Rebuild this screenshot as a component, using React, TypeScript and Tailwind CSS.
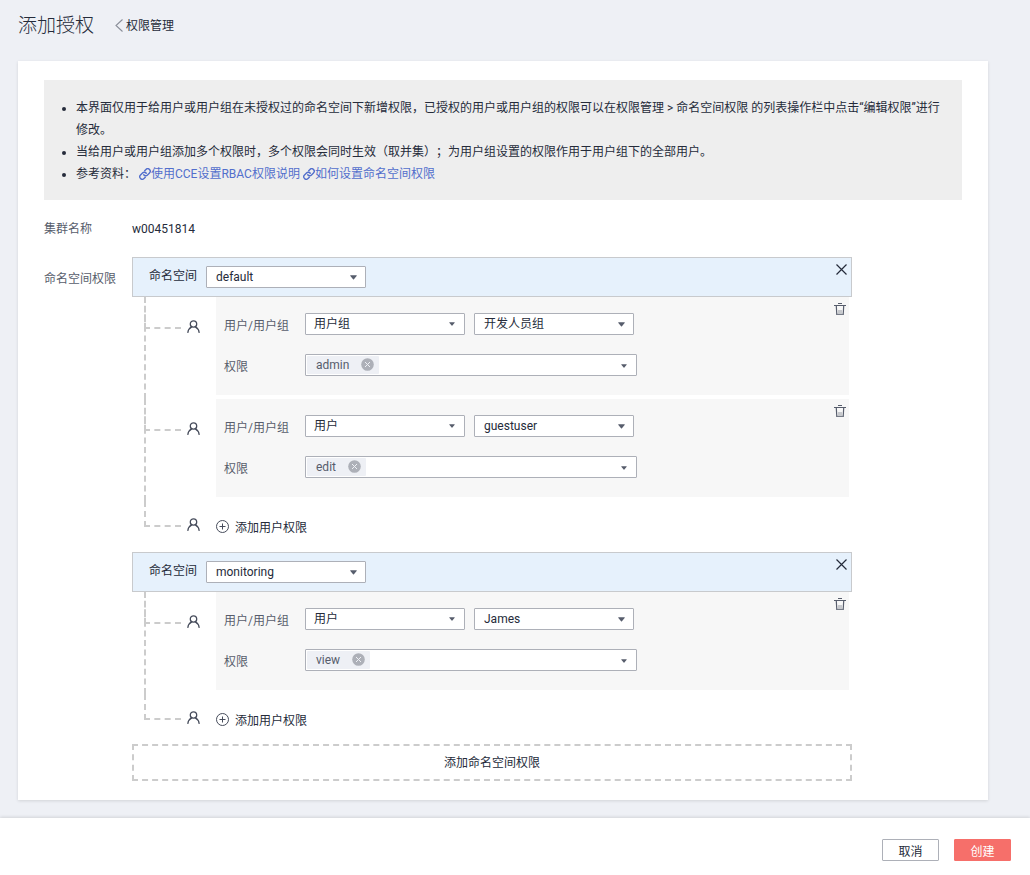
import React, { useState } from "react";

type Entry = { id: number; kind: string; subject: string; roles: string[] };
type Namespace = { id: number; name: string; entries: Entry[] };

const INITIAL: Namespace[] = [
  {
    id: 1,
    name: "default",
    entries: [
      { id: 1, kind: "用户组", subject: "开发人员组", roles: ["admin"] },
      { id: 2, kind: "用户", subject: "guestuser", roles: ["edit"] },
    ],
  },
  {
    id: 2,
    name: "monitoring",
    entries: [{ id: 3, kind: "用户", subject: "James", roles: ["view"] }],
  },
];

function Caret({ small = false }: { small?: boolean }) {
  return (
    <svg width={small ? 6 : 7} height={small ? 4 : 5} viewBox="0 0 8 5" fill="#575d6c" aria-hidden="true">
      <path d="M0.8 0h6.4c.5 0 .7.5.4.8L4.5 4.6a.7.7 0 0 1-1 0L.4.8C.1.5.3 0 .8 0z" />
    </svg>
  );
}

function UserIcon() {
  return (
    <svg width="13" height="13" viewBox="0 0 13 13" fill="none" stroke="#464c5b" strokeWidth="1.3" strokeLinecap="round" aria-hidden="true">
      <circle cx="6.5" cy="4" r="3.2" />
      <path d="M0.9 12.4C1.200 9.900 2.500 8.100 4.700 6.900M12.100 12.400C11.800 9.900 10.500 8.100 8.300 6.900" />
    </svg>
  );
}

function TrashIcon() {
  return (
    <svg width="12" height="13" viewBox="0 0 12 13" fill="none" stroke="#575d6c" aria-hidden="true">
      <path d="M4 0.5h4M0 2.500h12" />
      <path d="M2.300 3l.5 8.500h6.400l.5-8.500" strokeWidth="1.200" />
      <path d="M5 7v3.500M7 7v3.500M3 11.200h6" stroke="#8a8e99" strokeWidth="0.900" />
    </svg>
  );
}

function CloseIcon() {
  return (
    <svg width="11" height="11" viewBox="0 0 11 11" fill="none" stroke="#252b3a" strokeWidth="1.200" aria-hidden="true">
      <path d="M0.500 0.500l10 10M10.500 0.500l-10 10" />
    </svg>
  );
}

function LinkIcon() {
  return (
    <svg className="inline-block align-[-2px]" width="12" height="12" viewBox="0 0 24 24" fill="none" stroke="currentColor" strokeWidth="2.800" strokeLinecap="round" aria-hidden="true">
      <path d="M9.500 13.500a5 5 0 0 0 7.500.5l4-4a5 5 0 0 0-7.070-7.070l-2.500 2.500" />
      <path d="M14.500 10.500a5 5 0 0 0-7.500-.5l-4 4a5 5 0 0 0 7.070 7.070l2.500-2.500" />
    </svg>
  );
}

type SelectProps = { label?: string; id?: string; value: string; options: string[]; compact?: boolean };

function Select({ label, id, value, options, compact = false }: SelectProps) {
  return (
    <div className="relative w-40">
      <select
        id={id}
        aria-label={label}
        defaultValue={value}
        className={`block h-[22px] w-full appearance-none rounded-[1px] border border-[#adb0b8] bg-white pr-6 text-xs leading-5 text-[#252b3a] outline-none focus:border-[#5e7ce0] ${compact ? "pl-2" : "pl-[9px]"}`}
      >
        {options.map((o) => (
          <option key={o}>{o}</option>
        ))}
      </select>
      <span className={`pointer-events-none absolute inset-y-0 flex items-center ${compact ? "right-[10px]" : "right-[9px]"}`}>
        <Caret small={compact} />
      </span>
    </div>
  );
}

function EntryRow({ entry, onRemove, onRemoveRole }: { entry: Entry; onRemove: () => void; onRemoveRole: (r: string) => void }) {
  const kindId = `kind-${entry.id}`;
  const labelId = `roles-${entry.id}`;
  return (
    <li className="flex pr-[3px] pl-3">
      <div className="w-[43px] border-l-2 border-dashed border-[#ccc]">
        <div className="-ml-0.5 h-8 w-[37px] border-b-2 border-l-2 border-dashed border-[#ccc]" />
      </div>
      <div className="w-[29px] pt-[23px]">
        <UserIcon />
      </div>
      <div className="mb-1 flex flex-1 items-start justify-between bg-[#f7f7f7] pt-4 pr-[3px] pb-[19px] pl-2">
        <div className="flex flex-col gap-[19px]">
          <div className="flex h-[22px]">
            <label htmlFor={kindId} className="w-[81px] pt-0.5 text-[#575d6c]">
              用户/用户组
            </label>
            <div className="flex gap-[9px]">
              <Select compact id={kindId} value={entry.kind} options={["用户组", "用户"]} />
              <Select label="用户或用户组名称" value={entry.subject} options={["开发人员组", "guestuser", "James"]} />
            </div>
          </div>
          <div className="flex h-[22px]">
            <span id={labelId} className="w-[81px] pt-0.5 text-[#575d6c]">
              权限
            </span>
            <div
              role="group"
              aria-labelledby={labelId}
              className="flex h-[22px] w-[332px] items-center justify-between rounded-[1px] border border-[#adb0b8] bg-white px-px"
            >
              <div className="flex gap-1">
                {entry.roles.map((r) => (
                  <span key={r} className="flex h-[18px] items-center gap-3 rounded-[1px] bg-[#eef0f5] pr-[5px] pl-2 leading-[18px] text-[#575d6c]">
                    <span className="pl-px">{r}</span>
                    <button type="button" aria-label={`移除 ${r}`} className="pb-px" onClick={() => onRemoveRole(r)}>
                      <svg width="13" height="13" viewBox="0 0 13 13" className="block" aria-hidden="true">
                        <circle cx="6.500" cy="6.500" r="6.300" fill="#adb0b8" />
                        <path d="M4 4l5 5M9 4L4 9" stroke="#eef0f5" strokeWidth="1" />
                      </svg>
                    </button>
                  </span>
                ))}
              </div>
              <button type="button" aria-label="选择权限" className="flex h-full items-center px-2 pt-0.5">
                <Caret small />
              </button>
            </div>
          </div>
        </div>
        <button type="button" aria-label="删除" onClick={onRemove} className="-mt-[10px]">
          <TrashIcon />
        </button>
      </div>
    </li>
  );
}

export default function App() {
  const [groups, setGroups] = useState(INITIAL);
  const [nextId, setNextId] = useState(10);

  const updateEntries = (nsId: number, fn: (e: Entry[]) => Entry[]) =>
    setGroups((gs) => gs.map((g) => (g.id === nsId ? { ...g, entries: fn(g.entries) } : g)));

  const newEntry = (): Entry => {
    setNextId(nextId + 1);
    return { id: nextId, kind: "用户", subject: "guestuser", roles: [] };
  };

  return (
    <div className="flex min-h-screen flex-col bg-[#eef0f5] font-['Roboto','Noto_Sans_CJK_SC',sans-serif] text-xs leading-[22px] text-[#252b3a]">
      <header className="flex items-center gap-[21px] px-[18px] pt-[11px] pb-5">
        <h1 className="text-[19px] leading-[30px] font-light">添加授权</h1>
        <a href="#permissions" className="flex items-center gap-[3px]">
          <svg width="8" height="14" viewBox="0 0 8 14" fill="none" stroke="#8a8e99" strokeWidth="1.100" aria-hidden="true">
            <path d="M7.500 0.500L1 6.500L7.500 12.500" />
          </svg>
          权限管理
        </a>
      </header>

      <main className="mr-[42px] mb-[18px] ml-[18px] flex-1 bg-white px-[26px] pt-[19px] pb-[19px] shadow-[0_1px_3px_rgba(0,0,0,0.12)]">
        <section className="bg-[#eee] px-4 pt-[17px] pb-[15px]">
          <ul className="list-disc pl-4 [text-spacing-trim:space-all]">
            <li>
              本界面仅用于给用户或用户组在未授权过的命名空间下新增权限，已授权的用户或用户组的权限可以在权限管理 &gt; 命名空间权限 的列表操作栏中点击“编辑权限”进行修改。
            </li>
            <li>当给用户或用户组添加多个权限时，多个权限会同时生效（取并集）；为用户组设置的权限作用于用户组下的全部用户。</li>
            <li>
              参考资料：{" "}
              <a href="#rbac" className="text-[#526ecc]">
                <LinkIcon />
                使用CCE设置RBAC权限说明
              </a>{" "}
              <a href="#namespace" className="text-[#526ecc]">
                <LinkIcon />
                如何设置命名空间权限
              </a>
            </li>
          </ul>
        </section>

        <dl className="mt-[18px] flex">
          <dt className="w-[88px] text-[#575d6c]">集群名称</dt>
          <dd>w00451814</dd>
        </dl>

        <div className="mt-[17px] flex">
          <div className="w-[88px] shrink-0 pt-[11px] text-[#575d6c]">命名空间权限</div>
          <div className="w-full max-w-[720px]">
            <div className="flex flex-col gap-px">
              {groups.map((ns) => (
                <section key={ns.id}>
                  <div className="flex h-10 items-start justify-between border border-[#c8cacd] bg-[#e6f1fc] pt-2 pr-1 pl-4">
                    <div className="flex">
                      <label htmlFor={`ns-${ns.id}`} className="w-[57px] leading-5">
                        命名空间
                      </label>
                      <Select id={`ns-${ns.id}`} value={ns.name} options={["default", "monitoring"]} />
                    </div>
                    <button
                      type="button"
                      aria-label="移除命名空间"
                      className="-mt-[2px]"
                      onClick={() => setGroups(groups.filter((g) => g.id !== ns.id))}
                    >
                      <CloseIcon />
                    </button>
                  </div>
                  <ul>
                    {ns.entries.map((e) => (
                      <EntryRow
                        key={e.id}
                        entry={e}
                        onRemove={() => updateEntries(ns.id, (es) => es.filter((x) => x.id !== e.id))}
                        onRemoveRole={(r) =>
                          updateEntries(ns.id, (es) =>
                            es.map((x) => (x.id === e.id ? { ...x, roles: x.roles.filter((y) => y !== r) } : x)),
                          )
                        }
                      />
                    ))}
                  </ul>
                  <div className="flex h-[50px] pl-3">
                    <div className="w-[43px]">
                      <div className="h-[26px] w-[37px] border-b-2 border-l-2 border-dashed border-[#ccc]" />
                    </div>
                    <div className="w-[29px] pt-[17px]">
                      <UserIcon />
                    </div>
                    <button
                      type="button"
                      className="flex items-center gap-1.5"
                      onClick={() => {
                        const entry = newEntry();
                        updateEntries(ns.id, (es) => [...es, entry]);
                      }}
                    >
                      <svg width="13" height="13" viewBox="0 0 13 13" fill="none" stroke="#464c5b" strokeWidth="1" aria-hidden="true">
                        <circle cx="6.5" cy="6.5" r="6" />
                        <path d="M6.500 3.500v6M3.500 6.500h6" />
                      </svg>
                      <span className="pt-[3px]">添加用户权限</span>
                    </button>
                  </div>
                </section>
              ))}
            </div>
            <button
              type="button"
              className="h-[37px] w-full border-2 border-dashed border-[#ccc]"
              onClick={() => {
                setNextId(nextId + 1);
                setGroups([...groups, { id: nextId, name: "default", entries: [] }]);
              }}
            >
              添加命名空间权限
            </button>
          </div>
        </div>
      </main>

      <footer className="flex justify-end gap-[15px] bg-white pt-[21px] pr-[19px] pb-[14px] shadow-[0_-1px_3px_rgba(0,0,0,0.12)]">
        <button type="button" className="h-[22px] w-[57px] rounded-[1px] border border-[#adb0b8] bg-white pt-0.5 leading-5">
          取消
        </button>
        <button type="button" className="h-[22px] w-[57px] rounded-[1px] border border-[#f66f6a] bg-[#f66f6a] pt-0.5 leading-5 text-white">
          创建
        </button>
      </footer>
    </div>
  );
}
